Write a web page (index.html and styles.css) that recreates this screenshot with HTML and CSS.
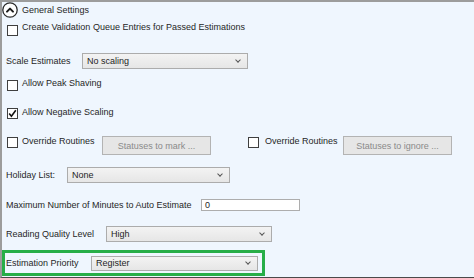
FILE: index.html
```html
<!DOCTYPE html>
<html>
<head>
<meta charset="utf-8">
<link rel="stylesheet" href="styles.css">
</head>
<body>
<div class="panel">
  <div class="header">
    <svg class="collapse" width="16" height="16" viewBox="0 0 16 16">
      <circle cx="8" cy="8" r="7.2" fill="#ffffff" stroke="#2b2b2b" stroke-width="1.3"/>
      <polyline points="5,9.6 8,6.6 11,9.6" fill="none" stroke="#1a1a1a" stroke-width="2" stroke-linecap="round" stroke-linejoin="round"/>
    </svg>
    <span class="text">General Settings</span>
  </div>

  <div class="row cb-row r-create">
    <span class="cb"></span>
    <span class="text">Create Validation Queue Entries for Passed Estimations</span>
  </div>

  <div class="row field r-scale">
    <span class="label l-scale">Scale Estimates</span>
    <div class="select s-scale"><span>No scaling</span><span class="arrow"></span></div>
  </div>

  <div class="row cb-row r-peak">
    <span class="cb"></span>
    <span class="text">Allow Peak Shaving</span>
  </div>

  <div class="row cb-row r-neg">
    <span class="cb checked">
      <svg width="11" height="11" viewBox="0 0 11 11"><polyline points="2.2,5.6 4.4,8.2 8.8,2.2" fill="none" stroke="#111" stroke-width="1.6"/></svg>
    </span>
    <span class="text">Allow Negative Scaling</span>
  </div>

  <div class="row r-override">
    <div class="override left">
      <span class="cb"></span>
      <span class="text">Override Routines</span>
      <span class="btn b-mark">Statuses to mark ...</span>
    </div>
    <div class="override right">
      <span class="cb"></span>
      <span class="text">Override Routines</span>
      <span class="btn b-ignore">Statuses to ignore ...</span>
    </div>
  </div>

  <div class="row field r-holiday">
    <span class="label l-holiday">Holiday List:</span>
    <div class="select s-holiday"><span>None</span><span class="arrow"></span></div>
  </div>

  <div class="row field r-max">
    <span class="label l-max">Maximum Number of Minutes to Auto Estimate</span>
    <div class="input">0</div>
  </div>

  <div class="row field r-reading">
    <span class="label l-reading">Reading Quality Level</span>
    <div class="select s-reading"><span>High</span><span class="arrow"></span></div>
  </div>

  <div class="row field highlight">
    <span class="label l-priority">Estimation Priority</span>
    <div class="select s-priority"><span>Register</span><span class="arrow"></span></div>
  </div>
</div>
</body>
</html>
```

FILE: styles.css
```css
html, body {
  margin: 0;
  padding: 0;
}
body {
  width: 474px;
  height: 278px;
  overflow: hidden;
  font-family: "Liberation Sans", Arial, sans-serif;
  font-size: 9px;
  color: #262626;
}
.panel {
  box-sizing: border-box;
  width: 474px;
  height: 278px;
  background: #eff6fe;
  border-top: 2px solid #9c9c9c;
  border-left: 2px solid #9c9c9c;
  border-bottom: 1px solid #4a4a4a;
  display: flex;
  flex-direction: column;
}
.text, .label {
  line-height: 11px;
  white-space: nowrap;
}
.header {
  display: flex;
  align-items: center;
  height: 16px;
  gap: 4px;
}
.collapse {
  display: block;
  flex: none;
}
.row {
  display: flex;
  flex: none;
}
.cb-row {
  align-items: flex-start;
  padding-left: 5px;
  gap: 4px;
  height: 14px;
}
.cb {
  box-sizing: border-box;
  width: 11px;
  height: 11px;
  flex: none;
  background: #ffffff;
  border: 1px solid #3f3f3f;
  margin-top: 2px;
  display: block;
}
.cb svg {
  display: block;
  margin: -1px 0 0 -1px;
}
.r-create { margin-top: 4px; }
.r-create .cb { margin-top: 3px; }
.r-peak { margin-top: 9px; }
.r-neg { margin-top: 15px; }
.r-neg .cb { margin-top: 1px; }

.field {
  align-items: center;
  padding-left: 4px;
}
.label { flex: none; }
.r-scale { margin-top: 17px; height: 16px; }
.l-scale { width: 76px; }
.r-holiday { margin-top: 12px; height: 16px; }
.l-holiday { width: 61px; }
.r-max { margin-top: 16px; height: 12px; }
.l-max { width: 195px; }
.r-reading { margin-top: 15px; height: 16px; }
.l-reading { width: 100px; }

.select {
  box-sizing: border-box;
  height: 16px;
  background: linear-gradient(#f3f3f3, #e6e6e6);
  border: 1px solid #acacac;
  display: flex;
  align-items: center;
  justify-content: space-between;
  padding: 0 7px 0 4px;
  color: #1e1e1e;
  line-height: 11px;
}
.arrow {
  width: 3px;
  height: 3px;
  border-right: 1.2px solid #555;
  border-bottom: 1.2px solid #555;
  transform: rotate(45deg);
  margin-top: -2px;
}
.s-scale { width: 166px; }
.s-holiday { width: 163px; }
.s-reading { width: 166px; }
.s-priority { width: 167px; height: 15px; }

.input {
  box-sizing: border-box;
  width: 99px;
  height: 12px;
  background: #ffffff;
  border: 1px solid #adadad;
  padding-left: 3px;
  line-height: 10px;
  color: #1e1e1e;
}

.r-override {
  margin-top: 15px;
  height: 19px;
}
.override {
  display: flex;
  align-items: flex-start;
}
.override .text { margin-top: 0; }
.left { padding-left: 5px; width: 241px; }
.left .cb { margin-right: 4px; margin-top: 1px; }
.left .text { width: 80px; }
.right .cb { margin-right: 6px; margin-top: 1px; }
.right .text { width: 78px; }
.btn {
  box-sizing: border-box;
  height: 19px;
  width: 109px;
  background: #e6e6e6;
  border: 1px solid #b3b3b3;
  color: #8a8a8a;
  display: flex;
  align-items: center;
  justify-content: center;
  white-space: nowrap;
}

.highlight {
  box-sizing: border-box;
  margin-top: 8px;
  width: 263px;
  height: 26px;
  border: 3px solid #27ae48;
  padding-left: 1px;
}
.l-priority { width: 85px; }
```
